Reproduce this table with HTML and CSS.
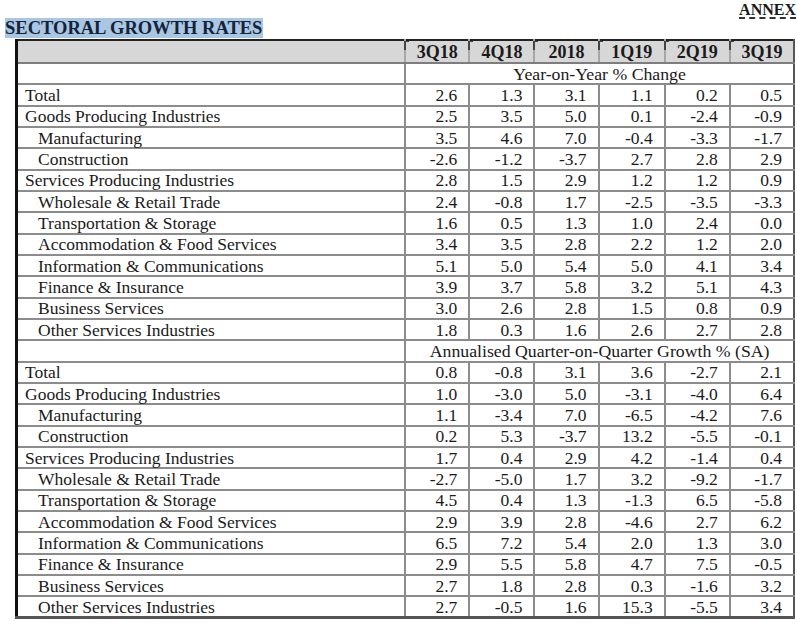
FILE: index.html
```html
<!DOCTYPE html>
<html>
<head>
<meta charset="utf-8">
<link rel="stylesheet" href="styles.css">
</head>
<body>
<div class="page">
  <div class="annex-line"><span class="annex">ANNEX</span></div>
  <h1 class="title"><span class="hl">SECTORAL GROWTH RATES</span></h1>
  <table class="grid">
    <colgroup>
      <col class="c-label"><col class="c-64"><col class="c-65"><col class="c-64"><col class="c-66"><col class="c-65"><col class="c-64">
    </colgroup>
    <thead>
      <tr class="head">
        <th></th><th>3Q18</th><th>4Q18</th><th>2018</th><th>1Q19</th><th>2Q19</th><th>3Q19</th>
      </tr>
    </thead>
    <tbody>
      <tr class="sec"><td></td><td colspan="6">Year-on-Year % Change</td></tr>
      <tr><td>Total</td><td>2.6</td><td>1.3</td><td>3.1</td><td>1.1</td><td>0.2</td><td>0.5</td></tr>
      <tr><td>Goods Producing Industries</td><td>2.5</td><td>3.5</td><td>5.0</td><td>0.1</td><td>-2.4</td><td>-0.9</td></tr>
      <tr><td class="ind">Manufacturing</td><td>3.5</td><td>4.6</td><td>7.0</td><td>-0.4</td><td>-3.3</td><td>-1.7</td></tr>
      <tr><td class="ind">Construction</td><td>-2.6</td><td>-1.2</td><td>-3.7</td><td>2.7</td><td>2.8</td><td>2.9</td></tr>
      <tr><td>Services Producing Industries</td><td>2.8</td><td>1.5</td><td>2.9</td><td>1.2</td><td>1.2</td><td>0.9</td></tr>
      <tr><td class="ind">Wholesale &amp; Retail Trade</td><td>2.4</td><td>-0.8</td><td>1.7</td><td>-2.5</td><td>-3.5</td><td>-3.3</td></tr>
      <tr><td class="ind">Transportation &amp; Storage</td><td>1.6</td><td>0.5</td><td>1.3</td><td>1.0</td><td>2.4</td><td>0.0</td></tr>
      <tr><td class="ind">Accommodation &amp; Food Services</td><td>3.4</td><td>3.5</td><td>2.8</td><td>2.2</td><td>1.2</td><td>2.0</td></tr>
      <tr><td class="ind">Information &amp; Communications</td><td>5.1</td><td>5.0</td><td>5.4</td><td>5.0</td><td>4.1</td><td>3.4</td></tr>
      <tr><td class="ind">Finance &amp; Insurance</td><td>3.9</td><td>3.7</td><td>5.8</td><td>3.2</td><td>5.1</td><td>4.3</td></tr>
      <tr><td class="ind">Business Services</td><td>3.0</td><td>2.6</td><td>2.8</td><td>1.5</td><td>0.8</td><td>0.9</td></tr>
      <tr><td class="ind">Other Services Industries</td><td>1.8</td><td>0.3</td><td>1.6</td><td>2.6</td><td>2.7</td><td>2.8</td></tr>
      <tr class="sec"><td></td><td colspan="6">Annualised Quarter-on-Quarter Growth % (SA)</td></tr>
      <tr><td>Total</td><td>0.8</td><td>-0.8</td><td>3.1</td><td>3.6</td><td>-2.7</td><td>2.1</td></tr>
      <tr><td>Goods Producing Industries</td><td>1.0</td><td>-3.0</td><td>5.0</td><td>-3.1</td><td>-4.0</td><td>6.4</td></tr>
      <tr><td class="ind">Manufacturing</td><td>1.1</td><td>-3.4</td><td>7.0</td><td>-6.5</td><td>-4.2</td><td>7.6</td></tr>
      <tr><td class="ind">Construction</td><td>0.2</td><td>5.3</td><td>-3.7</td><td>13.2</td><td>-5.5</td><td>-0.1</td></tr>
      <tr><td>Services Producing Industries</td><td>1.7</td><td>0.4</td><td>2.9</td><td>4.2</td><td>-1.4</td><td>0.4</td></tr>
      <tr><td class="ind">Wholesale &amp; Retail Trade</td><td>-2.7</td><td>-5.0</td><td>1.7</td><td>3.2</td><td>-9.2</td><td>-1.7</td></tr>
      <tr><td class="ind">Transportation &amp; Storage</td><td>4.5</td><td>0.4</td><td>1.3</td><td>-1.3</td><td>6.5</td><td>-5.8</td></tr>
      <tr><td class="ind">Accommodation &amp; Food Services</td><td>2.9</td><td>3.9</td><td>2.8</td><td>-4.6</td><td>2.7</td><td>6.2</td></tr>
      <tr><td class="ind">Information &amp; Communications</td><td>6.5</td><td>7.2</td><td>5.4</td><td>2.0</td><td>1.3</td><td>3.0</td></tr>
      <tr><td class="ind">Finance &amp; Insurance</td><td>2.9</td><td>5.5</td><td>5.8</td><td>4.7</td><td>7.5</td><td>-0.5</td></tr>
      <tr><td class="ind">Business Services</td><td>2.7</td><td>1.8</td><td>2.8</td><td>0.3</td><td>-1.6</td><td>3.2</td></tr>
      <tr><td class="ind">Other Services Industries</td><td>2.7</td><td>-0.5</td><td>1.6</td><td>15.3</td><td>-5.5</td><td>3.4</td></tr>
    </tbody>
  </table>
</div>
</body>
</html>
```
FILE: styles.css
```css
* { box-sizing: border-box; }
html, body { margin: 0; padding: 0; background: #fff; }
body {
  font-family: "Liberation Serif", "Times New Roman", serif;
  color: #1a1a1a;
  width: 797px;
  height: 627px;
  overflow: hidden;
}
.page { padding: 0 2px 0 5px; }
.annex-line {
  display: flex;
  justify-content: flex-end;
  height: 18px;
  padding-top: 2px;
}
.annex {
  font-weight: bold;
  font-size: 16px;
  line-height: 16px;
  color: #1a1a1a;
  text-decoration: underline dashed #333;
  text-decoration-thickness: 2px;
  text-underline-offset: 2px;
  margin-right: -1px;
}
.title {
  margin: 0;
  height: 21px;
  font-size: 18.5px;
  line-height: 21px;
  font-weight: bold;
  color: #14233a;
}
.hl { background: #a9c7e2; padding-right: 1px; display: inline-block; height: 20px; }
.grid {
  margin-left: 10px;
  border-collapse: collapse;
  table-layout: fixed;
  width: 780px;
  font-size: 17.5px;
  border-top: 2px solid #222;
  border-left: 3px solid #111;
  border-right: 2px solid #555;
  border-bottom: 3px solid #555;
}
.c-label { width: 388px; }
.c-64 { width: 64px; }
.c-65 { width: 65px; }
.c-66 { width: 66px; }
.grid td, .grid th {
  border: 2px solid #8c8c8c;
  padding: 0 11px 0 0;
  height: 21.33px;
  line-height: 18px;
  text-align: right;
  white-space: nowrap;
}
.grid td:first-child { text-align: left; padding-left: 7px; }
.grid td.ind { padding-left: 20px; }
.grid th:first-child { border-left: none; }
.grid td:first-child { border-left: none; }
.head th {
  background: #d7d7d7;
  font-weight: bold;
  font-size: 18px;
  text-align: center;
  padding: 0;
  height: 23px;
  border-top: none;
  border-color: #a6a6a6;
  border-bottom: 2px solid #7d7d7d;
  position: relative;
}
.head th + th::before {
  content: "";
  position: absolute;
  left: -2px;
  top: 0;
  width: 3px;
  height: 8px;
  border-left: 2px solid #444;
  border-top: 1px solid #444;
}
.sec td { text-align: center; padding: 0; line-height: 18px; font-size: 17.75px; }
.sec td:first-child { border-right: 2px solid #8c8c8c; }
.grid tr:last-child td { border-bottom: none; }
.grid td:last-child, .grid th:last-child { border-right: none; }
```
